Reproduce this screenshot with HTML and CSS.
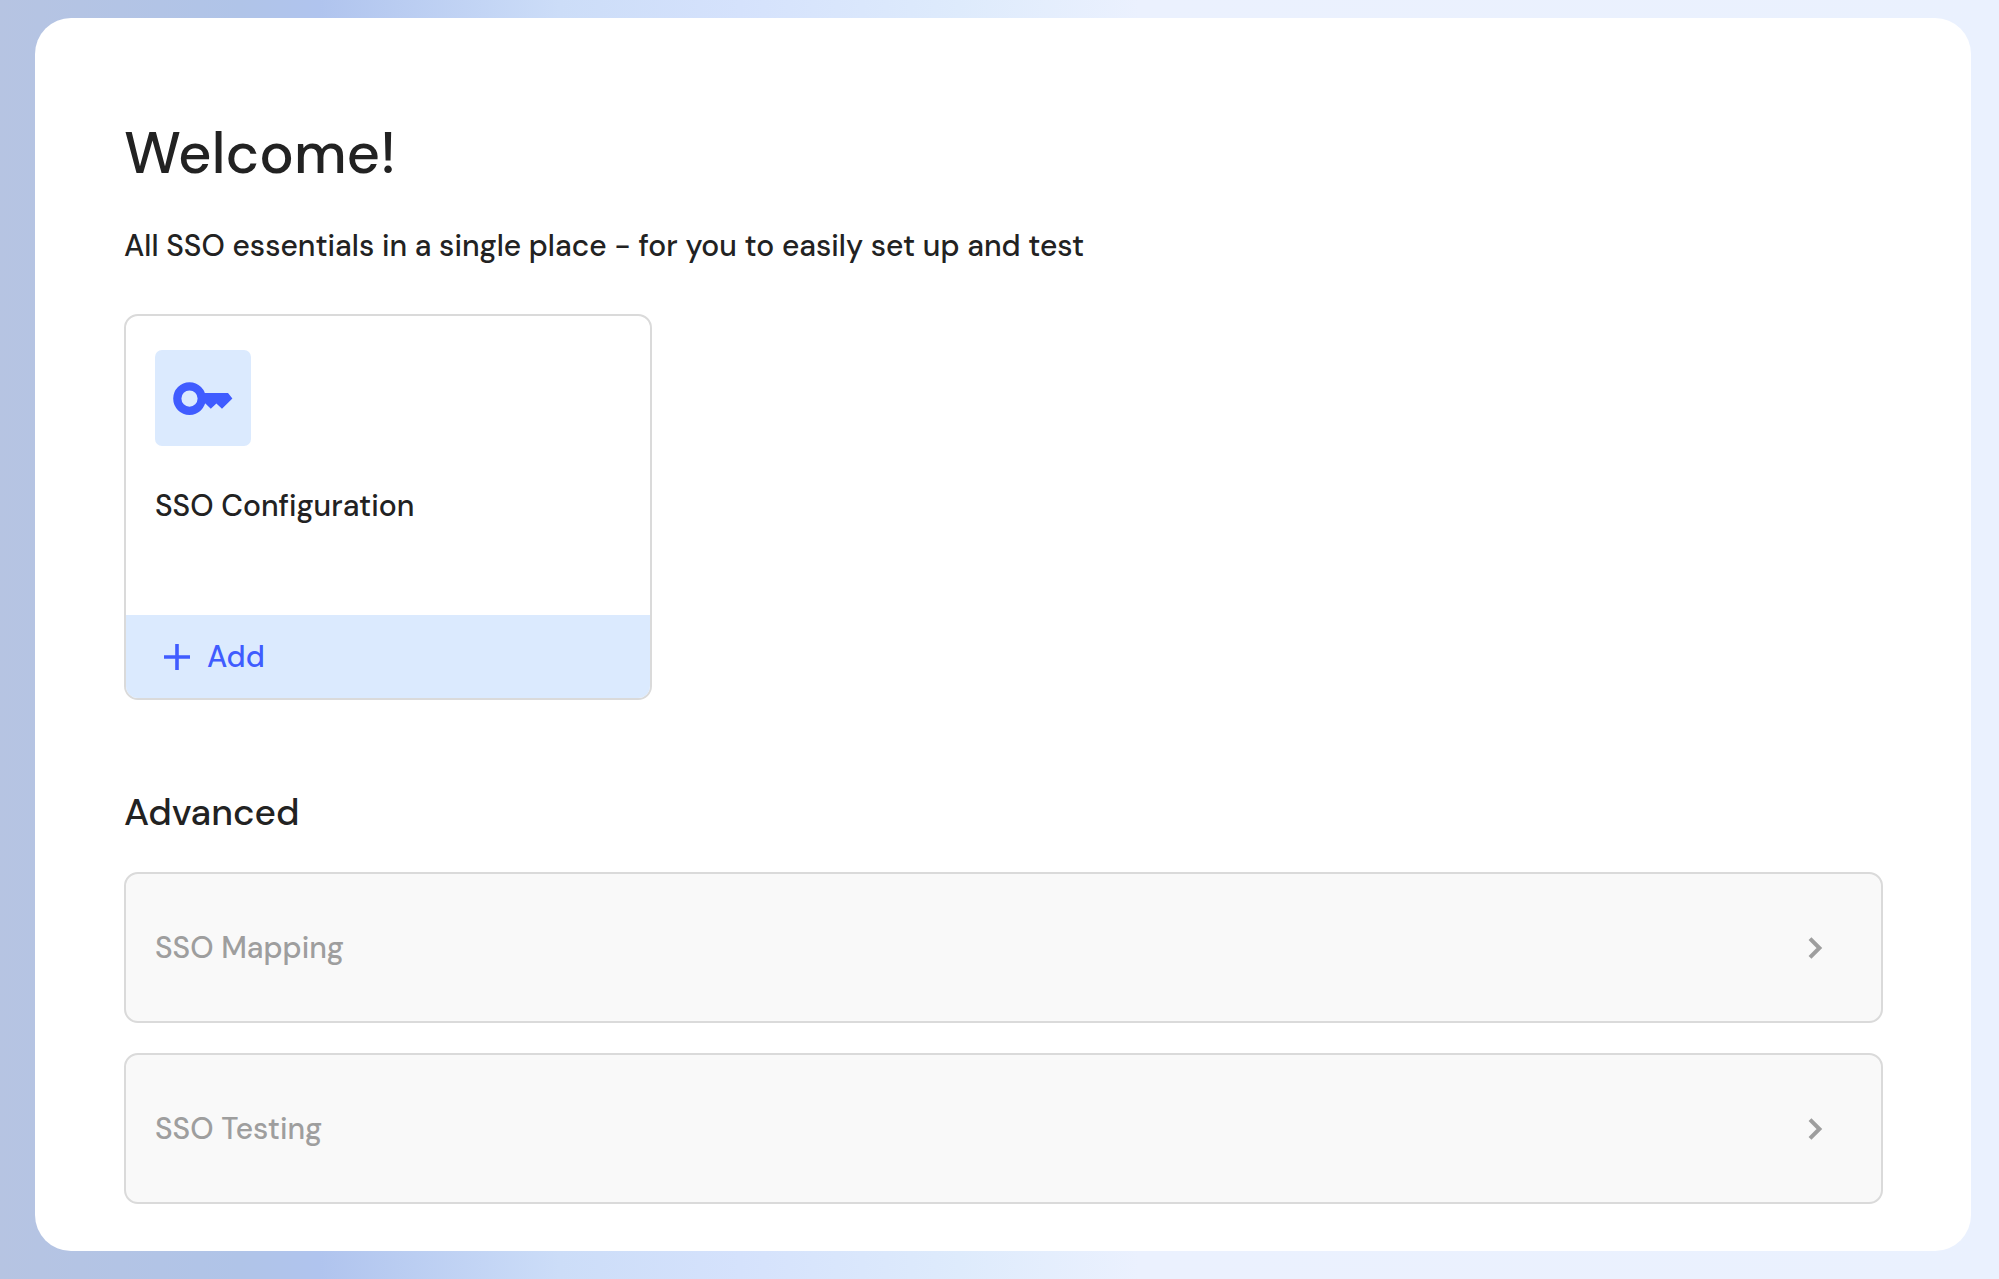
FILE: index.html
```html
<!DOCTYPE html>
<html lang="en">
<head>
<meta charset="utf-8">
<meta name="viewport" content="width=device-width, initial-scale=1">
<title>SSO setup</title>
<link rel="stylesheet" href="styles.css">
</head>
<body>
<main class="panel">
  <h1 class="title">Welcome!</h1>
  <p class="subtitle">All SSO essentials in a single place - for you to easily set up and test</p>

  <section class="card">
    <div class="card-body">
      <div class="card-icon">
        <svg width="96" height="96" viewBox="0 0 96 96" aria-hidden="true">
          <circle cx="34.5" cy="48.6" r="12.2" fill="none" stroke="currentColor" stroke-width="8.2"/>
          <path d="M46 43.1H73L77.4 48.6L67 58.8L61.4 53.6L55.8 58.8L50.4 53.6H46Z" fill="currentColor"/>
        </svg>
      </div>
      <h2 class="card-title">SSO Configuration</h2>
    </div>
    <button class="card-action" type="button">
      <svg width="28" height="28" viewBox="0 0 28 28" aria-hidden="true">
        <path d="M14 1V27M1 14H27" fill="none" stroke="currentColor" stroke-width="3.6"/>
      </svg>
      Add
    </button>
  </section>

  <section class="advanced">
    <h2 class="section-title">Advanced</h2>
    <div class="rows">
      <button class="row" type="button" disabled>
        <span>SSO Mapping</span>
        <svg width="16" height="24" viewBox="0 0 16 24" aria-hidden="true">
          <path d="M3 2.6L12.4 12L3 21.4" fill="none" stroke="currentColor" stroke-width="4"/>
        </svg>
      </button>
      <button class="row" type="button" disabled>
        <span>SSO Testing</span>
        <svg width="16" height="24" viewBox="0 0 16 24" aria-hidden="true">
          <path d="M3 2.6L12.4 12L3 21.4" fill="none" stroke="currentColor" stroke-width="4"/>
        </svg>
      </button>
    </div>
  </section>
</main>
</body>
</html>
```
FILE: styles.css
```css
* {
  box-sizing: border-box;
}

body {
  margin: 0;
  min-height: 100vh;
  padding: 18px 28px 28px 35px;
  display: flex;
  background: linear-gradient(90deg, #b6c4e2 0%, #b0c4e8 12%, #b0c4ee 16%, #ccddf8 28%, #d5e2fc 37%, #deebfc 48%, #ebf1fe 57%, #eaf1fe 100%);
  color: #222;
  font-family: "DM Sans", Inter, "Liberation Sans", sans-serif;
  font-weight: 500;
  font-variant-ligatures: none;
}

button {
  font: inherit;
  text-align: left;
}

svg {
  display: block;
  flex: none;
}

.panel {
  flex: 1;
  padding: 95px 88px 46px 89px;
  border-radius: 36px;
  background: #fff;
}

.title {
  margin: 0;
  font-size: 58px;
  line-height: 80px;
  font-weight: 500;
}

.subtitle {
  margin: 32px 0 0;
  font-size: 30px;
  line-height: 42px;
}

.card {
  width: 30%;
  margin-top: 47px;
  border: 2px solid #dadada;
  border-radius: 14px;
  overflow: hidden;
}

.card-body {
  padding: 34px 29px 88px;
}

.card-icon {
  width: 96px;
  border-radius: 7px;
  background: #dbeafe;
  color: #405cff;
}

.card-title {
  margin: 39px 0 0;
  font-size: 30px;
  line-height: 42px;
  font-weight: 500;
}

.card-action {
  display: flex;
  align-items: center;
  gap: 16px;
  width: 100%;
  height: 83px;
  padding: 0 37px;
  border: 0;
  background: #dbeafe;
  color: #405cff;
  font-size: 30px;
}

.advanced {
  margin-top: 87px;
}

.section-title {
  margin: 0;
  font-size: 37px;
  line-height: 50px;
  font-weight: 500;
}

.rows {
  display: flex;
  flex-direction: column;
  gap: 30px;
  margin-top: 35px;
}

.row {
  display: flex;
  align-items: center;
  justify-content: space-between;
  height: 151px;
  padding: 0 58px 0 29px;
  border: 2px solid #dadada;
  border-radius: 14px;
  background: #f9f9f9;
  color: #9e9e9e;
  font-size: 30px;
}
```
